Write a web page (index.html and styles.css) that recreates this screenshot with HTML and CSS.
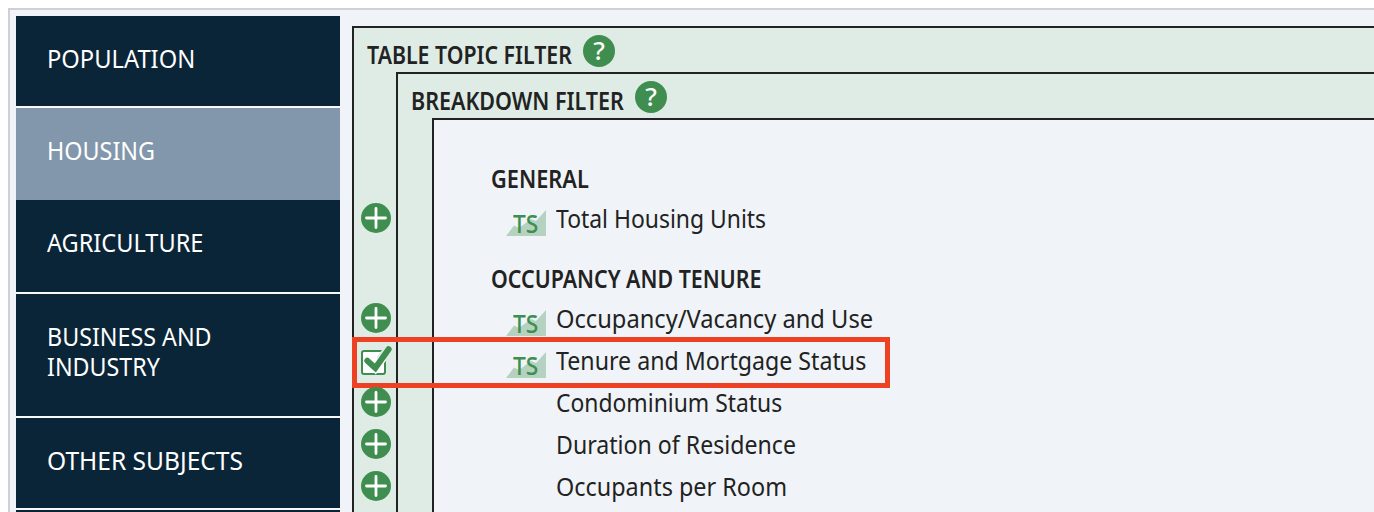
FILE: index.html
```html
<!DOCTYPE html>
<html lang="en">
<head>
<meta charset="utf-8">
<title>Topic filter</title>
<link rel="stylesheet" href="styles.css">
</head>
<body>
<svg class="defs" aria-hidden="true">
  <symbol id="plus" viewBox="0 0 30 30"><circle cx="15" cy="15" r="15" fill="#3f8e50"/><path d="M15 5.5v19M5.5 15h19" stroke="#fff" stroke-width="2.8" stroke-linecap="round"/></symbol>
  <symbol id="checked" viewBox="0 0 32 30"><rect x="1" y="5" width="23" height="23" rx="2" fill="#fff" stroke="#3f8e50" stroke-width="2"/><path d="M19 14.5L27 3.5" fill="none" stroke="#deece5" stroke-width="9"/><path d="M6.3 14.8L14.3 22.5L22 12" fill="none" stroke="#fff" stroke-width="8"/><path d="M6.3 14.8L14.3 22L27.6 3.2" fill="none" stroke="#3f8e50" stroke-width="6" stroke-linecap="round"/></symbol>
  <symbol id="trend" viewBox="0 0 40 26"><path d="M0 26L8 15.5L13 18L25 9L30 11L40 0V26Z" fill="#b4d2bf"/></symbol>
</svg>
<div class="app">
  <nav class="nav">
    <a class="tab"><span class="fit n1">POPULATION</span></a>
    <a class="tab active"><span class="fit n2">HOUSING</span></a>
    <a class="tab tall"><span class="fit n3">AGRICULTURE</span></a>
    <a class="tab double"><span class="fit n4">BUSINESS AND<br>INDUSTRY</span></a>
    <a class="tab"><span class="fit n5">OTHER SUBJECTS</span></a>
    <a class="tab"></a>
  </nav>
  <section class="frame topic">
    <h2 class="head"><span class="fit f-topic">TABLE TOPIC FILTER</span><i class="help">?</i></h2>
    <section class="frame breakdown">
      <h2 class="head"><span class="fit f-breakdown">BREAKDOWN FILTER</span><i class="help">?</i></h2>
      <div class="frame list">
        <h3 class="group"><span class="fit g1">GENERAL</span></h3>
        <div class="row"><svg class="mark"><use href="#plus"/></svg><span class="ts"><svg><use href="#trend"/></svg><b>TS</b></span><span class="fit r1">Total Housing Units</span></div>
        <h3 class="group second"><span class="fit g2">OCCUPANCY AND TENURE</span></h3>
        <div class="row"><svg class="mark"><use href="#plus"/></svg><span class="ts"><svg><use href="#trend"/></svg><b>TS</b></span><span class="fit r2">Occupancy/Vacancy and Use</span></div>
        <div class="row"><svg class="mark check"><use href="#checked"/></svg><span class="ts"><svg><use href="#trend"/></svg><b>TS</b></span><span class="fit r3">Tenure and Mortgage Status</span><span class="highlight"></span></div>
        <div class="row"><svg class="mark"><use href="#plus"/></svg><span class="ts"></span><span class="fit r4">Condominium Status</span></div>
        <div class="row"><svg class="mark"><use href="#plus"/></svg><span class="ts"></span><span class="fit r5">Duration of Residence</span></div>
        <div class="row"><svg class="mark"><use href="#plus"/></svg><span class="ts"></span><span class="fit r6">Occupants per Room</span></div>
      </div>
    </section>
  </section>
</div>
</body>
</html>
```
FILE: styles.css
```css
* { box-sizing: border-box; }
html, body { margin: 0; height: 512px; overflow: hidden; }
body { padding: 8px 0 0 8px; background: #fff; color: #222; font-family: "Noto Sans", sans-serif; font-size: 25px; }
.defs { position: absolute; width: 0; height: 0; }
.app { display: flex; gap: 12px; height: 504px; padding: 6px 0 0 6px; border: 2px solid #d0d0d0; border-right: 0; border-bottom: 0; background: #f0f4f8; overflow: hidden; }
.nav { flex: none; width: 324px; }
.tab { display: block; height: 92px; padding: 27px 31px 0; border-bottom: 2px solid #f7f9fb; background: #0a2538; color: #fff; line-height: 30px; }
.tab.active { background: #8297ab; border-color: #8297ab; }
.tab.tall { height: 94px; }
.tab.double { height: 124px; }
.fit { display: inline-block; white-space: nowrap; transform-origin: 0 50%; }
.n1 { transform: scaleX(.948); }
.n2 { transform: scaleX(.934); }
.n3 { transform: scaleX(.942); }
.n4 { transform: scaleX(.931); }
.n5 { transform: scaleX(.982); }
.f-topic { width: 204px; transform: scaleX(.852); }
.f-breakdown { width: 212px; transform: scaleX(.86); }
.g1 { transform: scaleX(.87); }
.g2 { transform: scaleX(.855); }
.r1 { transform: scaleX(.916); }
.r2 { transform: scaleX(.947); }
.r3 { transform: scaleX(.927); }
.r4 { transform: scaleX(.915); }
.r5 { transform: scaleX(.925); }
.r6 { transform: scaleX(.936); }
.frame { border: 2px solid #222; border-right: 0; border-bottom: 0; }
.topic { flex: 1; height: 500px; margin-top: 10px; background: #deece5; }
.breakdown { height: 460px; margin-left: 42px; }
.list { height: 420px; margin-left: 34px; padding: 43px 0 0 57px; background: #f0f4f8; }
.head { display: flex; gap: 12px; height: 44px; margin: 0; padding: 7px 0 0 13px; font-size: 25px; font-weight: 600; line-height: 38px; }
.help { width: 32px; height: 32px; border-radius: 50%; background: #3f8e50; color: #fff; font-size: 26px; font-style: normal; font-weight: 500; line-height: 30px; text-align: center; }
.group { height: 34px; margin: 0; font-size: 25px; font-weight: 600; line-height: 30px; }
.row { position: relative; display: flex; height: 42px; line-height: 42px; }
.group.second { margin-top: 24px; }
.mark { position: absolute; left: -130px; top: 6px; width: 30px; height: 30px; }
.mark.check { top: 7px; width: 32px; }
.highlight { position: absolute; left: -139px; top: -2px; width: 538px; height: 51px; border: 5px solid #ee4023; }
.ts { position: relative; flex: none; width: 40px; height: 26px; margin: 13px 10px 0 15px; }
.ts svg { display: block; width: 40px; height: 26px; }
.ts b { position: absolute; left: 7px; top: 0; font-size: 25px; line-height: 26px; color: #3f8e50; font-weight: 500; transform: scaleX(.91); transform-origin: 0 50%; }
```
